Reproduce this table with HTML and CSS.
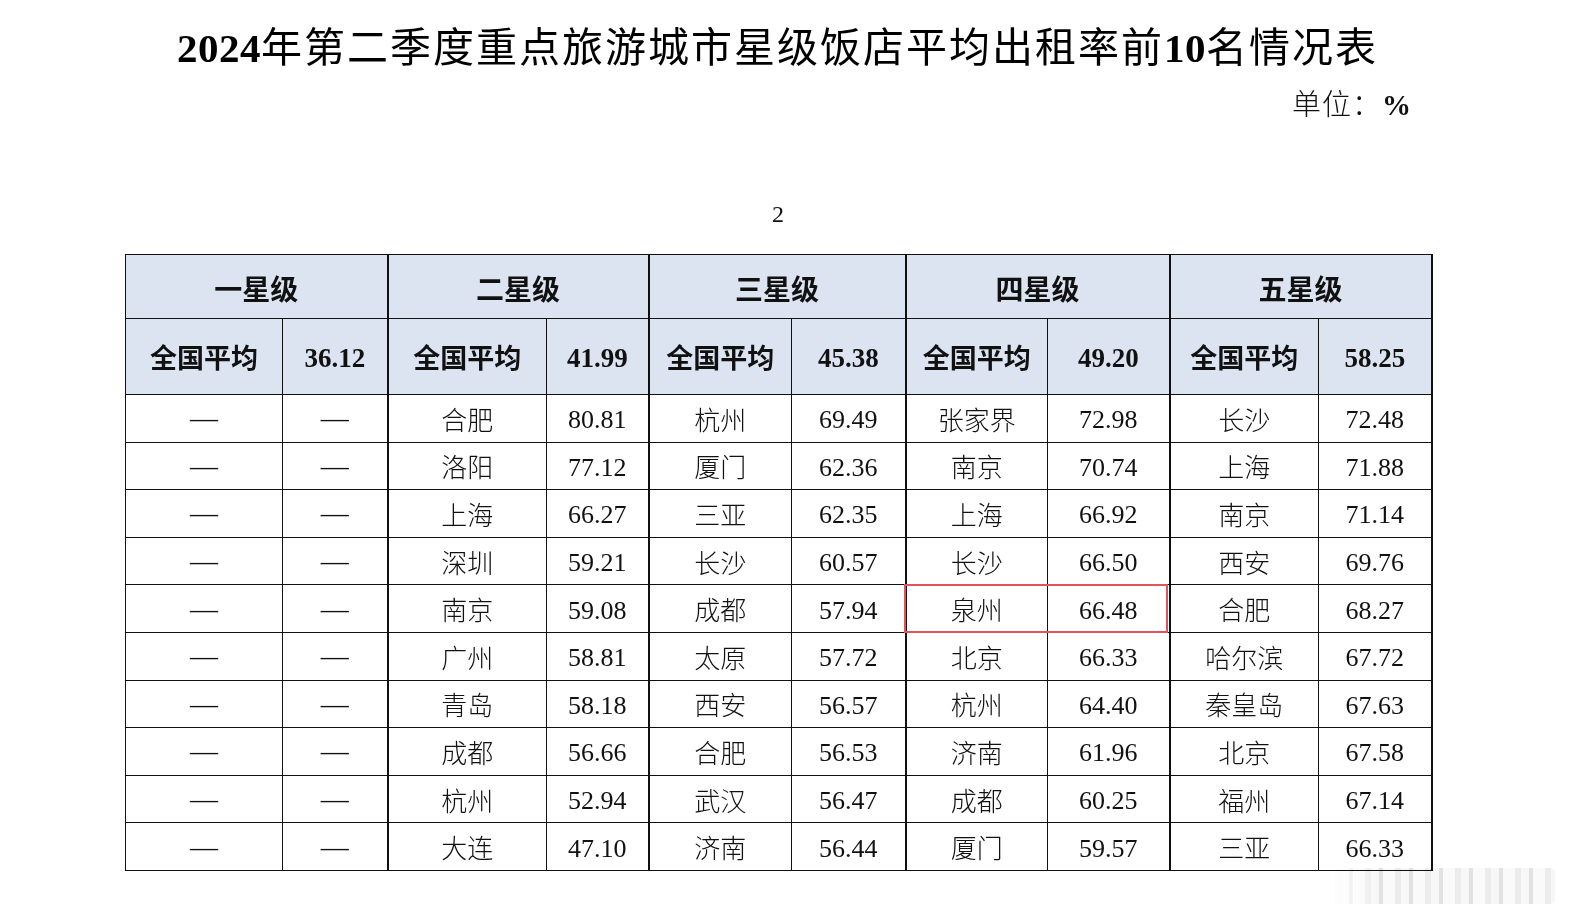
FILE: index.html
```html
<!DOCTYPE html>
<html lang="zh-CN">
<head>
<meta charset="utf-8">
<title>2024年第二季度重点旅游城市星级饭店平均出租率前10名情况表</title>
<link rel="stylesheet" href="styles.css">
</head>
<body>
<div class="page">
  <h1 class="title"><b>2024</b>年第二季度重点旅游城市星级饭店平均出租率前<b>10</b>名情况表</h1>
  <div class="unit">单位：<b>%</b></div>
  <div class="pagenum">2</div>
  <div class="tablewrap">
    <table class="rates">
      <colgroup>
        <col class="c1"><col class="c2"><col class="c3"><col class="c4"><col class="c5"><col class="c6"><col class="c7"><col class="c8"><col class="c9"><col class="c10">
      </colgroup>
      <thead>
        <tr class="grp">
          <th colspan="2" class="g">一星级</th>
          <th colspan="2" class="g">二星级</th>
          <th colspan="2" class="g">三星级</th>
          <th colspan="2" class="g">四星级</th>
          <th colspan="2" class="g">五星级</th>
        </tr>
        <tr class="avg">
          <th>全国平均</th><th class="g num">36.12</th>
          <th>全国平均</th><th class="g num">41.99</th>
          <th>全国平均</th><th class="g num">45.38</th>
          <th>全国平均</th><th class="g num">49.20</th>
          <th>全国平均</th><th class="g num">58.25</th>
        </tr>
      </thead>
      <tbody>
        <tr><td class="dash">—</td><td class="g dash">—</td><td>合肥</td><td class="g num">80.81</td><td>杭州</td><td class="g num">69.49</td><td>张家界</td><td class="g num">72.98</td><td>长沙</td><td class="g num">72.48</td></tr>
        <tr><td class="dash">—</td><td class="g dash">—</td><td>洛阳</td><td class="g num">77.12</td><td>厦门</td><td class="g num">62.36</td><td>南京</td><td class="g num">70.74</td><td>上海</td><td class="g num">71.88</td></tr>
        <tr><td class="dash">—</td><td class="g dash">—</td><td>上海</td><td class="g num">66.27</td><td>三亚</td><td class="g num">62.35</td><td>上海</td><td class="g num">66.92</td><td>南京</td><td class="g num">71.14</td></tr>
        <tr><td class="dash">—</td><td class="g dash">—</td><td>深圳</td><td class="g num">59.21</td><td>长沙</td><td class="g num">60.57</td><td>长沙</td><td class="g num">66.50</td><td>西安</td><td class="g num">69.76</td></tr>
        <tr><td class="dash">—</td><td class="g dash">—</td><td>南京</td><td class="g num">59.08</td><td>成都</td><td class="g num">57.94</td><td>泉州</td><td class="g num">66.48</td><td>合肥</td><td class="g num">68.27</td></tr>
        <tr><td class="dash">—</td><td class="g dash">—</td><td>广州</td><td class="g num">58.81</td><td>太原</td><td class="g num">57.72</td><td>北京</td><td class="g num">66.33</td><td>哈尔滨</td><td class="g num">67.72</td></tr>
        <tr><td class="dash">—</td><td class="g dash">—</td><td>青岛</td><td class="g num">58.18</td><td>西安</td><td class="g num">56.57</td><td>杭州</td><td class="g num">64.40</td><td>秦皇岛</td><td class="g num">67.63</td></tr>
        <tr><td class="dash">—</td><td class="g dash">—</td><td>成都</td><td class="g num">56.66</td><td>合肥</td><td class="g num">56.53</td><td>济南</td><td class="g num">61.96</td><td>北京</td><td class="g num">67.58</td></tr>
        <tr><td class="dash">—</td><td class="g dash">—</td><td>杭州</td><td class="g num">52.94</td><td>武汉</td><td class="g num">56.47</td><td>成都</td><td class="g num">60.25</td><td>福州</td><td class="g num">67.14</td></tr>
        <tr><td class="dash">—</td><td class="g dash">—</td><td>大连</td><td class="g num">47.10</td><td>济南</td><td class="g num">56.44</td><td>厦门</td><td class="g num">59.57</td><td>三亚</td><td class="g num">66.33</td></tr>
      </tbody>
    </table>
    <div class="highlight"></div>
  </div>
  <div class="smear"></div>
</div>
</body>
</html>
```
FILE: styles.css
```css
html, body {
  margin: 0;
  padding: 0;
  background: #ffffff;
}
body {
  font-family: "Liberation Serif", "Noto Sans CJK SC", serif;
  color: #111111;
}
.page {
  position: relative;
  width: 1570px;
  height: 923px;
  overflow: hidden;
}
.title {
  margin: 0;
  padding: 23px 15px 0 0;
  font-size: 41px;
  line-height: 50px;
  font-weight: 400;
  text-align: center;
  letter-spacing: 2px;
  color: #000;
}
.title b {
  font-weight: 700;
  letter-spacing: 0.5px;
}
.unit {
  margin-top: 12px;
  padding-right: 158px;
  text-align: right;
  font-size: 29px;
  line-height: 40px;
  font-weight: 300;
  letter-spacing: 1px;
}
.unit b {
  font-weight: 700;
}
.pagenum {
  margin-top: 75px;
  padding-right: 14px;
  text-align: center;
  font-size: 24px;
  line-height: 28px;
}
.tablewrap {
  position: relative;
  margin: 26px 0 0 125px;
  width: 1306px;
}
.rates {
  border-collapse: collapse;
  table-layout: fixed;
  width: 1306px;
}
.c1 { width: 157px; }
.c2 { width: 105px; }
.c3 { width: 159px; }
.c4 { width: 102px; }
.c5 { width: 143px; }
.c6 { width: 114px; }
.c7 { width: 142px; }
.c8 { width: 122px; }
.c9 { width: 149px; }
.c10 { width: 113px; }
.rates th, .rates td {
  border: 1px solid #111;
  padding: 0;
  text-align: center;
  vertical-align: middle;
}
.rates th.g, .rates td.g {
  border-right: 2px solid #111;
}
.rates thead th {
  background: #dce4f2;
  font-weight: 700;
  font-size: 27px;
}
.rates tr.grp th {
  height: 61px;
  font-size: 28px;
  padding-top: 2px;
}
.rates tr.avg th {
  height: 75px;
}
.rates tr.avg th.num {
  height: 72px;
  padding-top: 3px;
}
.rates td {
  height: 46.6px;
  font-size: 26px;
  font-weight: 300;
}
.rates td.num {
  height: 42.6px;
  padding-top: 4px;
}
.rates td.dash {
  font-size: 28px;
}
.highlight {
  position: absolute;
  left: 779px;
  top: 330px;
  width: 260px;
  height: 45px;
  border: 2px solid #e0555c;
  pointer-events: none;
}
.smear {
  position: absolute;
  left: 1335px;
  top: 868px;
  width: 220px;
  height: 36px;
  background:
    linear-gradient(to right, rgba(255,255,255,0.9), rgba(255,255,255,0) 20%),
    repeating-linear-gradient(to right, #ececec 0 6px, #f7f7f7 6px 14px, #e2e2e2 14px 18px, #fafafa 18px 30px);
  mix-blend-mode: multiply;
  border-radius: 4px;
}
```
